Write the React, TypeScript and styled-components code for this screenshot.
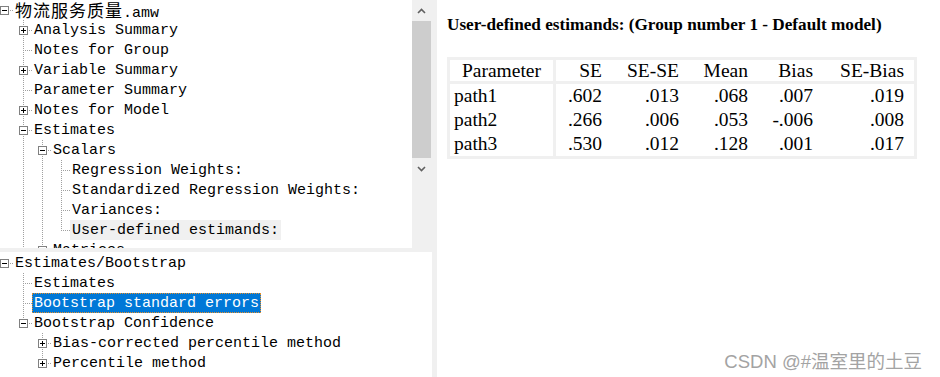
import React from "react";
import styled, { createGlobalStyle, css } from "styled-components";

type Guide = "pipe" | "blank";
type Conn = "tee" | "elbow" | "root";

interface TreeRow {
  guides: Guide[];
  conn: Conn;
  toggle?: "plus" | "minus";
  label: string;
  cjk?: string;
  state?: "hover" | "selected";
}

const topRows: TreeRow[] = [
  { guides: [], conn: "root", toggle: "minus", cjk: "物流服务质量", label: ".amw" },
  { guides: ["blank"], conn: "tee", toggle: "plus", label: "Analysis Summary" },
  { guides: ["blank"], conn: "tee", label: "Notes for Group" },
  { guides: ["blank"], conn: "tee", toggle: "plus", label: "Variable Summary" },
  { guides: ["blank"], conn: "tee", label: "Parameter Summary" },
  { guides: ["blank"], conn: "tee", toggle: "plus", label: "Notes for Model" },
  { guides: ["blank"], conn: "tee", toggle: "minus", label: "Estimates" },
  { guides: ["blank", "pipe"], conn: "tee", toggle: "minus", label: "Scalars" },
  { guides: ["blank", "pipe", "pipe"], conn: "tee", label: "Regression Weights:" },
  { guides: ["blank", "pipe", "pipe"], conn: "tee", label: "Standardized Regression Weights:" },
  { guides: ["blank", "pipe", "pipe"], conn: "tee", label: "Variances:" },
  { guides: ["blank", "pipe", "pipe"], conn: "elbow", label: "User-defined estimands:", state: "hover" },
  { guides: ["blank", "pipe"], conn: "tee", toggle: "plus", label: "Matrices" },
];

const bottomRows: TreeRow[] = [
  { guides: [], conn: "root", toggle: "minus", label: "Estimates/Bootstrap" },
  { guides: ["blank"], conn: "tee", label: "Estimates" },
  { guides: ["blank"], conn: "tee", label: "Bootstrap standard errors", state: "selected" },
  { guides: ["blank"], conn: "elbow", toggle: "minus", label: "Bootstrap Confidence" },
  { guides: ["blank", "blank"], conn: "tee", toggle: "plus", label: "Bias-corrected percentile method" },
  { guides: ["blank", "blank"], conn: "elbow", toggle: "plus", label: "Percentile method" },
];

const columns = [
  { key: "SE", width: 56 },
  { key: "SE-SE", width: 77 },
  { key: "Mean", width: 69 },
  { key: "Bias", width: 65 },
  { key: "SE-Bias", width: 91 },
];

const estimands = [
  { name: "path1", values: [".602", ".013", ".068", ".007", ".019"] },
  { name: "path2", values: [".266", ".006", ".053", "-.006", ".008"] },
  { name: "path3", values: [".530", ".012", ".128", ".001", ".017"] },
];

const vDots = "repeating-linear-gradient(to bottom, #a0a0a0 0 1px, transparent 1px 2px)";
const hDots = "repeating-linear-gradient(to right, #a0a0a0 0 1px, transparent 1px 2px)";

const ChevronUp = () => (
  <svg width="9" height="6" viewBox="0 0 9 6">
    <polyline points="1,5 4.5,1.5 8,5" fill="none" stroke="#606060" strokeWidth="1.6" />
  </svg>
);

const ChevronDown = () => (
  <svg width="9" height="6" viewBox="0 0 9 6">
    <polyline points="1,1 4.5,4.5 8,1" fill="none" stroke="#606060" strokeWidth="1.6" />
  </svg>
);

const Tree = ({ rows }: { rows: TreeRow[] }) => (
  <TreeList>
    {rows.map((row, i) => (
      <Row key={i}>
        {row.guides.map((g, j) => (
          <Indent key={j} $line={g === "pipe"} />
        ))}
        <Connector $kind={row.conn}>
          {row.toggle && <ToggleBox $open={row.toggle === "minus"} />}
        </Connector>
        <Label $state={row.state}>
          {row.cjk && <Cjk>{row.cjk}</Cjk>}
          {row.label}
        </Label>
      </Row>
    ))}
  </TreeList>
);

const App = () => {
  return (
    <>
      <GlobalStyle />
      <Window>
        <LeftColumn>
          <TopPane>
            <TreeViewport>
              <Tree rows={topRows} />
            </TreeViewport>
            <ScrollBar>
              <ScrollButton>
                <ChevronUp />
              </ScrollButton>
              <Thumb />
              <ScrollButton>
                <ChevronDown />
              </ScrollButton>
            </ScrollBar>
          </TopPane>
          <BottomPane>
            <Tree rows={bottomRows} />
          </BottomPane>
        </LeftColumn>
        <Splitter />
        <Output>
          <Title>User-defined estimands: (Group number 1 - Default model)</Title>
          <Table>
            <thead>
              <tr>
                <Th $first $width={106}>Parameter</Th>
                {columns.map((c) => (
                  <Th key={c.key} $width={c.width}>
                    {c.key}
                  </Th>
                ))}
              </tr>
            </thead>
            <tbody>
              {estimands.map((r) => (
                <tr key={r.name}>
                  <Td $first>{r.name}</Td>
                  {r.values.map((v, k) => (
                    <Td key={k}>{v}</Td>
                  ))}
                </tr>
              ))}
            </tbody>
          </Table>
          <Watermark>CSDN @#温室里的土豆</Watermark>
        </Output>
      </Window>
    </>
  );
};

export default App;

const GlobalStyle = createGlobalStyle`
  html, body {
    margin: 0;
    padding: 0;
    background: #f0f0f0;
  }
  * {
    box-sizing: border-box;
  }
`;

const Window = styled.div`
  width: 940px;
  height: 377px;
  display: grid;
  grid-template-columns: 432px 5px 1fr;
  background: #f0f0f0;
  overflow: hidden;
`;

const LeftColumn = styled.div`
  display: flex;
  flex-direction: column;
  gap: 4px;
  min-height: 0;
`;

const TopPane = styled.div`
  height: 248px;
  display: flex;
  background: #fff;
  overflow: hidden;
`;

const TreeViewport = styled.div`
  flex: 1;
  overflow: hidden;
`;

const ScrollBar = styled.div`
  width: 20px;
  display: flex;
  flex-direction: column;
  background: #f0f0f0;
  padding-right: 1px;
`;

const ScrollButton = styled.div`
  height: 21px;
  display: flex;
  align-items: center;
  justify-content: center;
`;

const Thumb = styled.div`
  height: 137px;
  background: #cdcdcd;
`;

const BottomPane = styled.div`
  flex: 1;
  background: #fff;
  padding-top: 1px;
  overflow: hidden;
`;

const Splitter = styled.div`
  background: #f0f0f0;
`;

const TreeList = styled.div`
  display: flex;
  flex-direction: column;
`;

const Row = styled.div`
  display: flex;
  height: 20px;
`;

const Indent = styled.span<{ $line: boolean }>`
  flex: none;
  width: 19px;
  height: 20px;
  ${(p) =>
    p.$line &&
    css`
      background: ${vDots} 4px 0 / 1px 100% no-repeat;
    `}
`;

const Connector = styled.span<{ $kind: Conn }>`
  flex: none;
  width: 13px;
  height: 20px;
  padding: 6px 0 0 0;
  background-repeat: no-repeat;
  ${(p) =>
    p.$kind === "root"
      ? css`
          background-image: ${hDots};
          background-size: 9px 1px;
          background-position: 4px 10px;
        `
      : css`
          background-image: ${vDots}, ${hDots};
          background-size: 1px ${p.$kind === "tee" ? "20px" : "10px"}, 9px 1px;
          background-position: 4px 0, 4px 10px;
        `}
`;

const ToggleBox = styled.span<{ $open: boolean }>`
  display: block;
  width: 9px;
  height: 9px;
  border: 1px solid #808080;
  background-color: #fff;
  background-repeat: no-repeat;
  background-image: linear-gradient(#000, #000)
    ${(p) => (p.$open ? "" : ", linear-gradient(#000, #000)")};
  background-size: 5px 1px, 1px 5px;
  background-position: 1px 3px, 3px 1px;
`;

const Label = styled.span<{ $state?: "hover" | "selected" }>`
  height: 20px;
  line-height: 20px;
  padding: 1px 2px 0;
  white-space: nowrap;
  font-family: "Liberation Mono", monospace;
  font-size: 15px;
  color: #000;

  ${(p) =>
    p.$state === "hover" &&
    css`
      background: #f0f0f0;
    `}
  ${(p) =>
    p.$state === "selected" &&
    css`
      background: #0078d7;
      color: #fff;
      outline: 1px dotted #e8902a;
      outline-offset: -1px;
    `}
`;

const Cjk = styled.span`
  font-family: "Noto Sans CJK SC", sans-serif;
  font-size: 17px;
  letter-spacing: 1px;
  line-height: 1;
`;

const Output = styled.div`
  position: relative;
  background: #fff;
  padding: 16px 0 0 10px;
`;

const Title = styled.div`
  font-family: "Liberation Serif", serif;
  font-weight: bold;
  font-size: 17.2px;
  line-height: 18px;
  color: #000;
  white-space: nowrap;
`;

const Table = styled.table`
  margin-top: 23px;
  width: 470px;
  table-layout: fixed;
  border-collapse: separate;
  border-spacing: 0;
  border: 3px solid #f0f0f0;
  font-family: "Liberation Serif", serif;
  font-size: 19.5px;
  color: #000;
`;

const Th = styled.th<{ $first?: boolean; $width: number }>`
  width: ${(p) => p.$width}px;
  font-weight: normal;
  height: 24px;
  line-height: 21px;
  padding: 0 10px 0 0;
  text-align: right;
  border-bottom: 3px solid #f0f0f0;
  white-space: nowrap;
  ${(p) =>
    p.$first &&
    css`
      text-align: center;
      padding: 0;
      border-right: 3px solid #f0f0f0;
    `}
`;

const Td = styled.td<{ $first?: boolean }>`
  height: 24px;
  line-height: 24px;
  padding: 0 10px 0 0;
  text-align: right;
  white-space: nowrap;
  ${(p) =>
    p.$first &&
    css`
      text-align: left;
      padding: 0 0 0 4px;
      border-right: 3px solid #f0f0f0;
    `}
`;

const Watermark = styled.div`
  position: absolute;
  right: 18px;
  bottom: 5px;
  font-family: "Liberation Sans", "Noto Sans CJK SC", sans-serif;
  font-size: 18.5px;
  line-height: 20px;
  color: #a3a3a3;
  white-space: nowrap;
`;
